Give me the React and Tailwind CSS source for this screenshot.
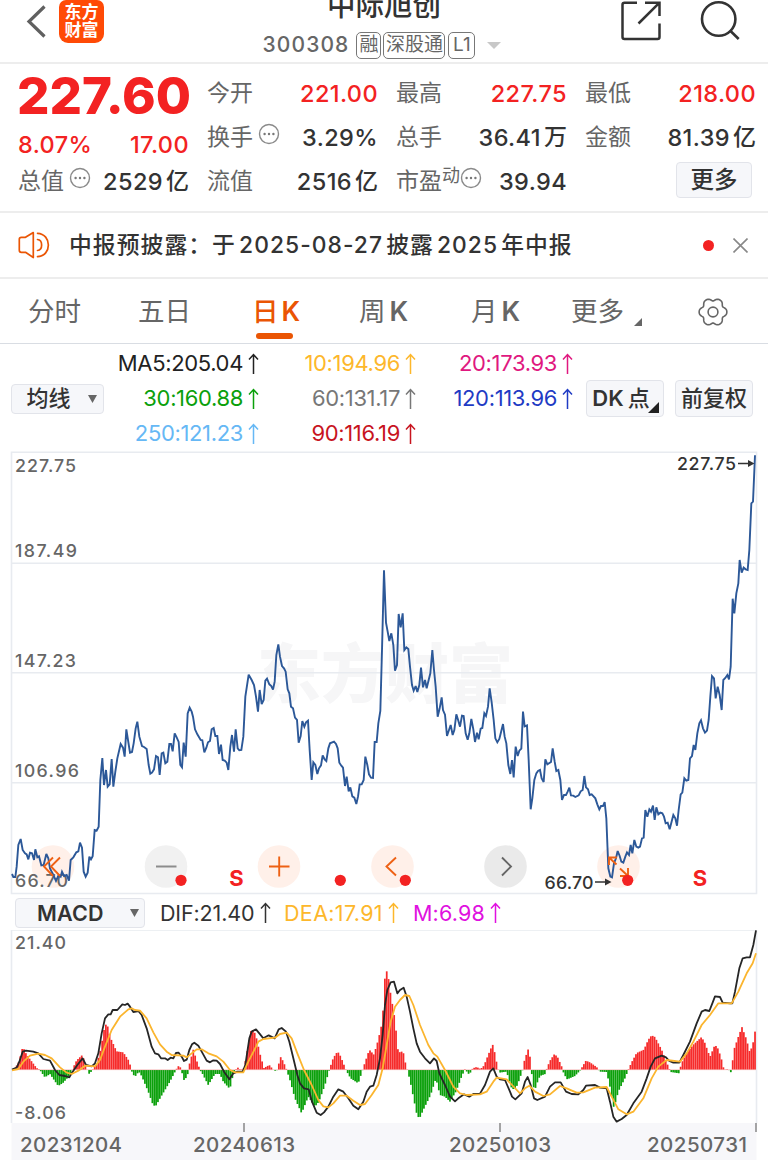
const FONT = "font-['Inter','Noto_Sans_CJK_SC',sans-serif]";

// Chart series are stored in thirds of a pixel.
const PRICE =
  '36,1272 40,1281 46,1281 50,1250 55,1185 62,1167 68,1200 75,1210 80,1213 85,1228 90,1208 96,1210 102,1230 106,1198 112,1222 117,1219 124,1246 131,1245 139,1212 145,1225 150,1255 160,1275 168,1293 176,1275 182,1280 186,1265 192,1278 200,1275 207,1292 212,1230 220,1222 229,1207 235,1204 240,1178 246,1193 251,1265 257,1280 263,1268 268,1220 273,1228 278,1219 284,1140 290,1142 296,1130 301,990 307,924 312,1005 318,960 323,1010 329,1003 335,927 340,1010 346,965 352,925 362,882 369,893 374,920 379,838 384,870 390,908 396,906 401,880 407,835 412,815 418,860 426,888 432,891 440,897 446,945 451,971 456,968 462,958 468,918 474,922 479,975 485,910 490,908 496,940 502,935 508,882 513,882 518,904 524,850 530,862 536,876 541,945 546,952 551,878 557,920 563,790 569,773 575,785 579,800 585,838 592,853 602,870 607,871 613,907 619,893 624,877 630,873 635,838 641,834 646,858 652,858 657,912 663,884 668,930 674,932 680,938 685,960 691,890 696,855 702,905 707,838 713,895 718,901 724,900 730,860 736,740 746,674 755,690 762,705 768,740 774,785 779,720 785,762 791,750 796,692 801,686 808,703 814,708 819,719 824,695 829,615 835,583 840,620 846,648 852,655 857,665 863,718 868,730 873,770 879,775 885,803 891,810 896,878 902,858 907,813 913,830 918,817 924,812 929,900 935,990 940,937 946,945 952,972 957,955 963,946 968,916 974,928 979,933 985,895 990,880 1002,875 1008,882 1013,895 1018,938 1024,947 1029,953 1035,1008 1040,980 1046,1024 1051,1012 1057,1039 1063,1043 1069,1062 1074,1040 1079,1003 1085,1003 1091,990 1096,920 1102,945 1107,973 1113,983 1119,984 1124,876 1130,876 1135,820 1141,783 1146,600 1152,361 1158,518 1163,545 1168,573 1174,550 1180,585 1185,662 1191,645 1196,492 1202,532 1208,490 1213,600 1219,592 1225,597 1230,650 1236,705 1241,722 1247,708 1252,726 1258,705 1263,653 1269,712 1275,690 1280,715 1286,690 1291,670 1297,600 1302,660 1307,710 1313,800 1319,775 1325,742 1329,780 1335,794 1341,858 1347,840 1352,825 1358,855 1363,840 1369,793 1375,812 1380,830 1386,797 1391,798 1397,850 1403,869 1408,850 1414,807 1420,838 1425,876 1431,848 1436,868 1442,836 1447,834 1453,790 1458,798 1464,770 1469,715 1475,757 1481,810 1486,865 1492,877 1498,867 1503,847 1509,822 1514,860 1519,880 1525,945 1531,972 1536,930 1541,982 1547,890 1553,918 1558,902 1564,896 1569,785 1574,829 1581,826 1586,930 1592,1078 1597,1045 1603,990 1609,970 1614,963 1620,960 1625,985 1631,996 1636,928 1642,943 1653,936 1658,895 1664,935 1669,963 1675,960 1681,990 1686,1050 1692,1035 1698,1035 1703,1025 1708,1013 1713,1036 1720,1037 1726,1041 1736,1036 1742,1024 1748,1020 1753,978 1758,1012 1764,1018 1769,1035 1775,1033 1786,1045 1792,1063 1798,1078 1803,1068 1809,1068 1814,1056 1819,1105 1825,1255 1831,1280 1836,1282 1842,1240 1848,1225 1853,1203 1859,1218 1864,1235 1870,1238 1876,1220 1881,1207 1887,1215 1892,1185 1897,1210 1903,1170 1909,1190 1915,1193 1920,1190 1926,1165 1931,1163 1936,1080 1942,1100 1948,1078 1953,1085 1959,1067 1964,1110 1969,1072 1975,1093 1981,1088 1987,1090 1992,1100 1997,1120 2003,1118 2009,1138 2014,1118 2020,1095 2026,1105 2031,1127 2036,1080 2042,1033 2047,1028 2053,985 2059,992 2065,990 2070,925 2076,918 2081,885 2086,900 2092,850 2098,820 2103,811 2109,835 2115,848 2121,842 2126,810 2131,740 2136,678 2142,685 2147,745 2153,710 2159,735 2165,780 2170,690 2176,684 2182,675 2187,688 2192,650 2198,446 2203,490 2209,430 2215,400 2219,330 2225,368 2231,353 2237,358 2243,360 2248,300 2254,160 2259,155 2265,16';

const DIF =
  '36,524 50,518 58,500 68,470 78,467 100,470 115,475 130,492 150,497 165,525 178,540 195,543 208,547 218,530 232,510 248,490 258,510 275,514 285,505 295,475 305,415 315,370 325,358 332,358 338,345 352,345 367,328 375,330 383,326 390,335 400,351 415,348 425,360 440,400 455,455 465,475 475,478 483,490 495,490 503,495 512,488 520,490 528,474 536,473 545,485 552,498 560,494 568,465 576,448 583,443 595,452 608,475 620,497 630,502 640,496 650,497 660,507 672,530 688,553 700,535 712,530 728,530 736,510 748,430 755,410 768,403 778,415 790,430 806,421 824,430 836,403 845,399 858,410 868,440 880,490 892,540 900,565 912,580 926,583 936,620 950,653 962,660 972,652 985,635 1000,605 1015,583 1030,590 1045,610 1060,632 1075,643 1090,620 1100,590 1110,575 1120,572 1130,540 1140,490 1148,420 1155,330 1162,285 1172,262 1182,260 1192,295 1200,285 1211,278 1220,305 1230,350 1240,400 1250,445 1260,470 1275,490 1290,505 1302,490 1310,498 1318,535 1335,570 1350,605 1365,619 1375,610 1392,598 1408,605 1420,597 1440,596 1455,570 1470,530 1480,520 1490,545 1500,553 1515,555 1530,590 1536,605 1546,613 1565,595 1575,560 1583,546 1592,570 1602,610 1612,615 1635,605 1650,575 1665,562 1682,562 1698,590 1715,597 1735,598 1750,585 1758,572 1785,570 1800,578 1820,580 1830,620 1840,665 1850,680 1865,672 1880,660 1900,625 1925,590 1940,550 1952,515 1965,490 1985,482 1998,487 2008,498 2020,503 2038,503 2050,480 2070,440 2090,385 2105,350 2115,345 2128,348 2137,325 2145,304 2160,306 2168,323 2190,325 2197,325 2205,290 2218,220 2228,190 2240,187 2250,187 2260,150 2268,106';

const DEA =
  '36,526 55,522 70,500 90,482 115,476 135,480 155,490 180,517 200,533 215,537 235,527 255,512 285,514 300,495 315,455 335,405 360,365 385,343 395,340 405,345 420,347 440,370 460,412 480,448 500,470 515,480 550,482 560,487 575,475 590,463 605,463 625,475 650,484 670,500 690,525 705,532 730,532 745,500 768,455 775,440 790,432 825,428 840,417 860,413 875,430 892,475 912,525 935,570 955,615 970,634 985,637 1000,625 1020,602 1040,602 1060,617 1080,630 1095,627 1115,600 1135,570 1148,520 1160,450 1172,380 1185,335 1200,315 1215,300 1228,303 1240,330 1260,390 1285,450 1300,475 1312,485 1335,525 1360,575 1380,595 1400,600 1440,598 1460,590 1480,560 1490,548 1520,553 1536,570 1560,595 1575,580 1588,572 1605,590 1630,603 1650,598 1680,573 1700,580 1730,593 1750,592 1785,578 1820,576 1835,605 1855,643 1880,658 1900,650 1930,610 1955,550 1975,515 2000,495 2040,500 2060,475 2080,440 2105,390 2130,360 2155,325 2195,325 2215,290 2240,235 2258,205 2268,175';

const HIST =
  '38,2 46,6 55,20 60,35 66,62 72,62 80,45 95,25 110,5 120,0 124,-6 135,-22 150,-12 175,-48 190,-38 213,-12 219,5 230,28 248,45 255,18 262,0 268,-12 278,0 290,15 302,60 315,135 322,135 332,95 350,55 370,52 388,25 394,0 400,-15 408,-18 416,-4 425,-18 445,-65 460,-107 468,-107 485,-77 510,-35 528,0 538,14 544,0 552,-30 562,-20 568,15 580,60 592,22 600,0 608,-12 625,-45 645,-12 660,-12 670,-35 690,-57 697,-25 706,0 714,6 722,0 732,4 740,45 752,115 760,120 768,102 780,48 792,5 808,14 820,0 830,-4 834,8 842,38 850,25 860,0 870,-30 885,-85 905,-130 925,-80 945,-110 957,-95 975,-45 988,0 1000,35 1013,55 1022,40 1038,0 1052,-25 1075,-40 1088,0 1098,30 1108,60 1122,45 1135,90 1145,135 1150,185 1156,295 1163,295 1170,240 1185,150 1195,50 1204,55 1212,48 1218,10 1222,0 1230,-30 1240,-80 1250,-130 1258,-147 1270,-120 1292,-75 1308,-25 1320,-75 1335,-80 1350,-95 1368,-65 1385,-20 1395,2 1408,-14 1418,4 1430,8 1442,2 1452,12 1465,45 1478,76 1486,45 1492,10 1498,-8 1520,-5 1536,-58 1548,-55 1558,-30 1568,0 1574,30 1585,62 1592,30 1598,-40 1604,-62 1612,-38 1620,-18 1636,-12 1642,8 1652,30 1663,46 1672,40 1685,10 1692,-12 1702,-28 1725,-18 1742,0 1758,27 1770,22 1790,8 1800,-5 1820,-6 1830,-50 1842,-115 1855,-65 1875,-25 1885,0 1895,22 1910,50 1932,60 1945,90 1955,103 1965,98 1985,60 2005,10 2012,-6 2025,-8 2038,-10 2044,18 2060,50 2080,75 2105,98 2115,80 2130,38 2145,75 2155,62 2165,30 2172,0 2185,2 2194,-8 2202,60 2215,98 2226,128 2240,90 2250,50 2262,90 2268,135'
    .split(' ')
    .map((p) => p.split(',').map(Number));

function histAt(x) {
  for (let i = 1; i < HIST.length; i++) {
    const [x0, v0] = HIST[i - 1];
    const [x1, v1] = HIST[i];
    if (x <= x1) return v0 + ((v1 - v0) * (x - x0)) / (x1 - x0);
  }
  return HIST[HIST.length - 1][1];
}

const BARS = Array.from({ length: 400 }, (_, i) => {
  const x = 36 + i * 5.58;
  return { x, v: histAt(x + 2.8) };
});

// Six-lobed outline of the settings gear.
const GEAR = Array.from({ length: 90 }, (_, i) => {
  const a = (i * 4 * Math.PI) / 180;
  const r = 12.7 + 1.4 * Math.cos(6 * a) - 0.25 * Math.cos(12 * a);
  return `${(16 + r * Math.cos(a)).toFixed(2)},${(15 + r * Math.sin(a)).toFixed(2)}`;
}).join(' ');

function Label({ x, y, w, children, size = 17.8, fill = '#666', weight = 500, anchor = 'start' }) {
  return (
    <text x={x} y={y} fontSize={size} fill={fill} fontWeight={weight} textAnchor={anchor} textLength={w} lengthAdjust="spacing">
      {children}
    </text>
  );
}

function Dots() {
  return (
    <svg className="mb-2 h-[22px] w-[22px] shrink-0" viewBox="0 0 22 22" fill="none">
      <circle cx="11" cy="11" r="9.500" stroke="#8a8a8a" strokeWidth="1.400" />
      <circle cx="6.600" cy="11" r="1.200" fill="#777" />
      <circle cx="11" cy="11" r="1.200" fill="#777" />
      <circle cx="15.400" cy="11" r="1.200" fill="#777" />
    </svg>
  );
}

function Header() {
  const badge = 'flex h-[27px] items-center justify-center rounded-[5px] border-[1.500px] border-[#777] text-[19px]';
  return (
    <header className="flex h-16 items-start justify-between overflow-hidden border-b-2 border-[#ededed]">
      <div className="flex w-[184px] items-start">
        <svg className="mt-1 ml-[26px] h-9 w-5" viewBox="0 0 20 36" fill="none" stroke="#606060" strokeWidth="3.200">
          <path d="M18.500 2.500 3 17.500 18.500 32.500" />
        </svg>
        <div className="ml-[13px] flex h-[43px] w-[45px] flex-col items-center justify-center rounded-b-[9px] rounded-t-[7px] bg-[#ff4a06] pb-[2px] text-[17px] leading-[18px] font-bold text-white">
          <span>东方</span>
          <span>财富</span>
        </div>
      </div>
      <div className="flex flex-col items-center">
        <div className="-mt-[11px] h-[38px] text-[28.500px] leading-[34px] font-medium text-[#333]">中际旭创</div>
        <div className="mt-1 mr-1 flex h-7 items-center gap-[2px] text-[#666]">
          <span className="mr-[5px] text-[21px] font-medium tracking-[1.100px]">300308</span>
          <span className={`${badge} w-[25px]`}>融</span>
          <span className={`${badge} w-[62px]`}>深股通</span>
          <span className={`${badge} ml-[1px] w-[27px]`}>L1</span>
          <svg className="ml-[10px] h-[7px] w-[14px]" viewBox="0 0 14 7" fill="#c8c8c8">
            <path d="M0 0H14L7 7Z" />
          </svg>
        </div>
      </div>
      <div className="flex w-[184px] items-start justify-end">
        <svg className="mr-[38px] h-[42px] w-[42px]" viewBox="0 0 42 42" fill="none" stroke="#333" strokeWidth="2.500">
          <path d="M17 2.700H4.500Q2.500 2.700 2.500 4.700V37Q2.500 39 4.500 39H37.500Q39.500 39 39.500 37V23.500M25 2.700H39.500V16M39 3.200 18.500 23.500" />
        </svg>
        <svg className="mr-[26px] h-[42px] w-[42px]" viewBox="0 0 42 42" fill="none" stroke="#333" strokeWidth="2.600">
          <circle cx="18.700" cy="19" r="16.700" />
          <path d="M30 30.500 38.700 39" />
        </svg>
      </div>
    </header>
  );
}

function Item({ label, value, unit, red, dots, sup }) {
  return (
    <div className="flex h-11 items-center justify-between pt-px">
      <span className="flex items-center text-[23px] text-[#666]">
        {label}
        {sup && <span className="-mr-[5px] mb-3 text-[18px]">{sup}</span>}
        {dots && <span className="ml-[5px] flex"><Dots /></span>}
      </span>
      <span className={`flex items-center text-[23.500px] font-[550] tracking-[0.400px] ${red ? 'text-[#f32222]' : 'text-[#333]'}`}>
        {value}
        {unit && <span className="ml-[3px] text-[23px] font-medium tracking-normal">{unit}</span>}
      </span>
    </div>
  );
}

function Quote() {
  return (
    <section className="grid h-[149px] grid-cols-[171px_171px_171px_171px] gap-x-[18px] border-b-2 border-[#ededed] pt-[7px] pl-[18px]">
      <div>
        <div className="-ml-px h-[50px] text-[51px] leading-[50px] font-extrabold text-[#f32222]">227.60</div>
        <div className="flex h-[38px] items-center justify-between pt-[9px] text-[23.500px] font-[550] tracking-[0.400px] text-[#f32222]">
          <span>8.07%</span>
          <span>17.00</span>
        </div>
        <Item label="总值" value="2529" unit="亿" dots />
      </div>
      <div>
        <Item label="今开" value="221.00" red />
        <Item label="换手" value="3.29%" dots />
        <Item label="流值" value="2516" unit="亿" />
      </div>
      <div>
        <Item label="最高" value="227.75" red />
        <Item label="总手" value="36.41" unit="万" />
        <Item label="市盈" value="39.94" sup="动" dots />
      </div>
      <div>
        <Item label="最低" value="218.00" red />
        <Item label="金额" value="81.39" unit="亿" />
        <div className="mt-[3px] ml-[91px] flex h-9 w-[76px] items-center justify-center rounded-[4px] border-[1.500px] border-[#e2e4ea] bg-[#f6f7fa] text-[23.500px] font-medium text-[#333]">更多</div>
      </div>
    </section>
  );
}

function Notice() {
  return (
    <section className="flex h-[66px] items-center border-b-2 border-[#ededed]">
      <svg className="ml-[18px] h-7 w-8" viewBox="0 0 32 28" fill="none" stroke="#ea5504" strokeWidth="1.700" strokeLinejoin="round" strokeLinecap="round">
        <path d="M15.300 1.500 7.500 6.300H3.300Q1.300 6.300 1.300 8.300V19.300Q1.300 21.300 3.300 21.300H7.500L15.300 26.500ZM19.500 8.500C25 9 25 19 19.500 19.500M19.500 2.300C34 3 34 25 19.500 25.700" />
      </svg>
      <span className="ml-[19px] text-[22.800px] font-medium tracking-[1.050px] whitespace-nowrap text-[#333] [word-spacing:-4px]">中报预披露：于 2025-08-27 披露 2025 年中报</span>
      <span className="ml-auto h-[11px] w-[11px] rounded-full bg-[#f32222]" />
      <svg className="mr-5 ml-[19px] h-[15px] w-[15px]" viewBox="0 0 15 15" stroke="#888" strokeWidth="1.600">
        <path d="M0.500 0.500 14.500 14.500M14.500 0.500 0.500 14.500" />
      </svg>
    </section>
  );
}

function Tabs() {
  const tab = 'flex h-full items-center whitespace-nowrap';
  return (
    <nav className="flex h-[65px] items-center border-b-[1.500px] border-[#d9dde3] pt-px pl-7 text-[26.500px] text-[#666] [word-spacing:-4px]">
      <span className={`${tab} w-[110px]`}>分时</span>
      <span className={`${tab} w-[114px]`}>五日</span>
      <span className={`${tab} relative w-[107px] font-medium text-[#ea5504]`}>
        日 <b className="ml-[3px] font-semibold">K</b>
        <span className="absolute bottom-[4px] left-1 h-[6px] w-[37px] rounded-full bg-[#ea5504]" />
      </span>
      <span className={`${tab} w-[112px]`}>周 <b className="ml-1 font-semibold">K</b></span>
      <span className={`${tab} w-[100px]`}>月 <b className="ml-1 font-semibold">K</b></span>
      <span className={`${tab} w-[126px]`}>
        更多
        <svg className="mt-5 ml-[10px] h-2 w-2" viewBox="0 0 8 8" fill="#666">
          <path d="M8 0V8H0Z" />
        </svg>
      </span>
      <svg className="h-[30px] w-[32px]" viewBox="0 0 32 30" fill="none" stroke="#666" strokeWidth="1.600" strokeLinejoin="round">
        <polygon points={GEAR} />
        <circle cx="16" cy="15" r="4.900" />
      </svg>
    </nav>
  );
}

function UpArrow() {
  return (
    <svg className="h-[22px] w-[11px] shrink-0" viewBox="0 0 11 22" fill="none" stroke="currentColor" strokeWidth="1.500">
      <path d="M5.500 21V1.500M1 6.500 5.500 1.500 10 6.500" />
    </svg>
  );
}

function Ma({ children, color }) {
  return (
    <span className={`flex items-center justify-end gap-[5px] tracking-[-0.350px] ${color}`}>
      {children}
      <UpArrow />
    </span>
  );
}

function MovingAverages() {
  const button = 'flex shrink-0 items-center justify-center rounded-[4px] border-[1.500px] border-[#e2e4ea] bg-[#f6f7fa] font-medium text-[#333]';
  return (
    <section className="flex h-[107px] items-center pt-[2px] pl-[11px] text-[22px]">
      <div className={`${button} h-[30px] w-[93px] gap-[17px] pl-2`}>
        均线
        <svg className="h-2 w-[9px]" viewBox="0 0 9 8" fill="#666"><path d="M0 0H9L4.500 8Z" /></svg>
      </div>
      <div className="grid h-[105px] grid-cols-[155px_157px_157px] grid-rows-3 whitespace-nowrap">
        <Ma color="text-[#222]">MA5:205.04</Ma>
        <Ma color="text-[#fdb72b]">10:194.96</Ma>
        <Ma color="text-[#e0187f]">20:173.93</Ma>
        <Ma color="text-[#0ba00b]">30:160.88</Ma>
        <Ma color="text-[#777]">60:131.17</Ma>
        <Ma color="text-[#1f3bc4]">120:113.96</Ma>
        <Ma color="text-[#66b8f5]">250:121.23</Ma>
        <Ma color="text-[#c8141e]">90:116.19</Ma>
      </div>
      <div className={`${button} relative ml-[13px] h-[37px] w-[78px] pr-2`}>
        <span className="font-semibold">DK</span>
        <span className="ml-1">点</span>
        <svg className="absolute right-1 bottom-[3px] h-[11px] w-[11px]" viewBox="0 0 11 11" fill="#222"><path d="M11 0V11H0Z" /></svg>
      </div>
      <div className={`${button} ml-[11px] h-[37px] w-[78px]`}>前复权</div>
    </section>
  );
}

function PriceChart() {
  return (
    <svg className="block h-[445px] w-full shrink-0" viewBox="0 451 768 445">
      <text x="257" y="697" fontSize="64" fontWeight="900" fill="#f6f6f7" textLength="256">东方财富</text>
      <g stroke="#e8ebf0" strokeWidth="1.600" fill="none">
        <path d="M11.500 452.200H756.500V893.500H11.500Z" />
        <path d="M12 563.200H756M12 672.800H756M12 782.800H756" />
      </g>
      <g fill="#fff0e9">
        <circle cx="53" cy="866.500" r="21.300" />
        <circle cx="279" cy="866.500" r="21.300" />
        <circle cx="392.500" cy="866.500" r="21.300" />
        <circle cx="618.500" cy="866.500" r="21.300" />
      </g>
      <circle cx="166" cy="866.500" r="21.300" fill="#f1f1f1" />
      <circle cx="505.500" cy="866.500" r="21.300" fill="#eaeaea" />
      <Label x="15" y="472" w="61">227.75</Label>
      <Label x="15" y="556.500" w="62">187.49</Label>
      <Label x="15" y="666.500" w="61">147.23</Label>
      <Label x="15" y="777" w="64">106.96</Label>
      <Label x="15" y="887" w="53">66.70</Label>
      <g transform="translate(0 450) scale(0.333333)">
        <polyline points={PRICE} fill="none" stroke="#2c5898" strokeWidth="5.700" strokeLinejoin="miter" strokeMiterlimit="3" />
      </g>
      <Label x="677" y="470" w="59" fill="#333">227.75</Label>
      <Label x="544.500" y="889" w="49" fill="#333">66.70</Label>
      <g stroke="#333" strokeWidth="1.700" fill="#333">
        <path d="M738 463.500H749M595 882H606" />
        <path d="M748 460 754.500 463.500 748 467ZM605 878.500 611.500 882 605 885.500Z" stroke="none" />
      </g>
      <g fill="none" stroke="#ee6114" strokeWidth="1.900">
        <path d="M53 857.500 44 866.500 53 876M60 857.500 51 866.500 60 876" />
        <path d="M269 866.500H289.500M279.200 856.500V876.500" />
        <path d="M396 857.500 386.500 866.500 396 875.500" />
        <path d="M609 865V857.500H617M609 857.500 616.500 864.500M620 868.500 627.500 875.500M620 876H628V868" />
      </g>
      <path d="M156 866.500H176.500" stroke="#8c8c8c" strokeWidth="2" />
      <path d="M502 857.500 511 866.500 502 875.500" fill="none" stroke="#666" strokeWidth="1.900" />
      <g fill="#f32222">
        <circle cx="181" cy="880.300" r="5.600" />
        <circle cx="340.300" cy="880.300" r="5.600" />
        <circle cx="405.300" cy="880.300" r="5.600" />
        <circle cx="627.700" cy="880.300" r="5.600" />
      </g>
      <Label x="236.500" y="885.500" size={22} fill="#f32222" weight={700} anchor="middle">S</Label>
      <Label x="700" y="885.500" size={22} fill="#f32222" weight={700} anchor="middle">S</Label>
    </svg>
  );
}

function MacdBar() {
  return (
    <div className="flex h-[34px] items-center pl-[15px] text-[21.500px] whitespace-nowrap">
      <div className="flex h-[30px] w-[130px] items-center rounded-[4px] border-[1.500px] border-[#e2e4ea] bg-[#f6f7fa] pl-[21px] font-semibold tracking-[0.200px] text-[#333]">
        MACD
        <svg className="ml-auto mr-[5px] h-2 w-[9px]" viewBox="0 0 9 8" fill="#666"><path d="M0 0H9L4.500 8Z" /></svg>
      </div>
      <span className="ml-[15px] flex w-[124px] items-center gap-[6px] tracking-[-0.150px] text-[#333]">DIF:21.40<UpArrow /></span>
      <span className="flex w-[129px] items-center gap-[5px] tracking-[0.350px] text-[#fdb72b]">DEA:17.91<UpArrow /></span>
      <span className="flex items-center gap-[5px] tracking-[0.200px] text-[#e010e0]">M:6.98<UpArrow /></span>
    </div>
  );
}

function MacdChart() {
  return (
    <svg className="block h-[230px] w-full shrink-0" viewBox="0 930 768 230">
      <rect x="11.500" y="1123" width="745" height="37" fill="#f7f7fa" />
      <path d="M11.500 1123V930H756.500V1123" fill="none" stroke="#e8ebf0" strokeWidth="1.600" />
      <Label x="15" y="948.500" w="51">21.40</Label>
      <Label x="15" y="1118.500" w="51">-8.06</Label>
      <g transform="translate(0 895) scale(0.333333)">
        {BARS.map(({ x, v }) => (
          <rect key={x} x={x} y={v > 0 ? 524 - v : 525} width="5.250" height={Math.abs(v)} fill={v > 0 ? '#f62b2b' : '#0ba00b'} />
        ))}
        <path d="M36 524H2268" stroke="#f0a0a0" strokeWidth="1.500" />
        <polyline points={DIF} fill="none" stroke="#262626" strokeWidth="5.400" strokeLinejoin="round" />
        <polyline points={DEA} fill="none" stroke="#fbb52e" strokeWidth="5.400" strokeLinejoin="round" />
      </g>
      <path d="M244 1123V1132M500 1123V1132M756 1123V1132" stroke="#888" strokeWidth="1.500" />
      <Label x="20" y="1151.500" w="102" size={20.5}>20231204</Label>
      <Label x="193" y="1151.500" w="102" size={20.5}>20240613</Label>
      <Label x="449" y="1151.500" w="102" size={20.5}>20250103</Label>
      <Label x="647" y="1151.500" w="100" size={20.5}>20250731</Label>
    </svg>
  );
}

export default function App() {
  return (
    <main className={`flex h-[1160px] w-[768px] flex-col overflow-hidden bg-white ${FONT}`}>
      <Header />
      <Quote />
      <Notice />
      <Tabs />
      <MovingAverages />
      <PriceChart />
      <MacdBar />
      <MacdChart />
    </main>
  );
}
